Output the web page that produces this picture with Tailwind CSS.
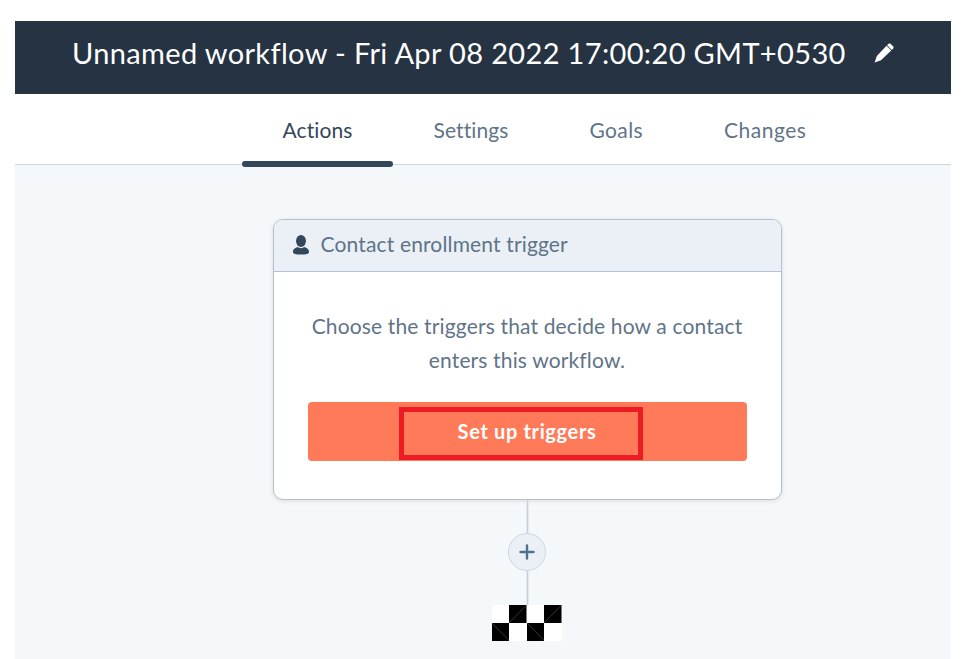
<!DOCTYPE html>
<html lang="en">
<head>
  <meta charset="UTF-8">
  <title>Unnamed workflow</title>
  <script src="https://cdn.jsdelivr.net/npm/@tailwindcss/browser@4"></script>
</head>
<body class="bg-white h-[659px] overflow-hidden font-['Lato',sans-serif]">
  <div class="ml-[15px] pt-[21px] w-[936px]">
    <!-- title bar -->
    <header class="h-[73px] bg-[#253342] flex items-center pl-[57px] pb-[9px] text-white">
      <h1 class="text-[29px] font-normal tracking-[0.35px] whitespace-nowrap">Unnamed workflow - Fri Apr 08 2022 17:00:20 GMT+0530</h1>
      <svg class="ml-[28px] w-[20px] h-[20px]" viewBox="0 0 20 20" fill="#fff">
        <path d="M14.5 0.8 Q15.6 0 16.6 0.8 L19.2 3.4 Q20 4.4 19.2 5.5 L17.8 6.9 L13.1 2.2 Z"/>
        <path d="M12.5 2.8 L17.2 7.5 L7 17.2 L0.6 19.4 L2.8 13 Z"/>
      </svg>
    </header>

    <!-- tabs -->
    <nav class="h-[71px] bg-white border-b border-[#cbd6e2] flex pl-[227px] text-[21px] tracking-[0.1px] text-[#5f7488]">
      <a class="px-[40.5px] pt-[20px] text-[#33475b] relative">Actions
        <span class="absolute left-0 right-0 bottom-[-3px] h-[6px] rounded-[3px] bg-[#33475b]"></span>
      </a>
      <a class="px-[40.5px] pt-[20px]">Settings</a>
      <a class="px-[40.5px] pt-[20px] tracking-[0.4px]">Goals</a>
      <a class="px-[40.5px] pt-[20px] tracking-[0.5px]">Changes</a>
    </nav>

    <!-- canvas -->
    <main class="bg-[#f5f8fa] h-[494px] pt-[54px] pl-[88px] flex flex-col items-center">
      <div class="w-[509px] h-[281px] bg-white border border-[#b5c1cf] rounded-[10px] shadow-[0_1px_4px_rgba(45,62,80,0.15)] overflow-hidden shrink-0">
        <div class="h-[52px] bg-[#eaf0f6] border-b border-[#b5c1cf] flex items-center pl-[18px] text-[21px] tracking-[0.15px] text-[#5f7488]">
          <svg class="w-[18px] h-[20px] mr-[11px] mb-[2px]" viewBox="0 0 18 20" fill="#33475b">
            <ellipse cx="9" cy="6" rx="5" ry="6"/>
            <path d="M1 17 C1 13.5 4 12.5 6 12 C7 13.5 11 13.5 12 12 C14 12.5 17 13.5 17 17 C17 19 14 19.5 9 19.5 C4 19.5 1 19 1 17 Z"/>
          </svg>
          <span class="mb-[3px]">Contact enrollment trigger</span>
        </div>
        <div class="px-[34px] pt-[37px]">
          <p class="text-center text-[21px] tracking-[0.15px] leading-[34px] text-[#5f7488]">Choose the triggers that decide how a contact enters this workflow.</p>
          <button class="relative mt-[25px] w-full h-[59px] bg-[#ff7a59] rounded-[4px] text-white text-[20px] tracking-[0.65px] font-bold">
            <span class="relative top-[-1px]">Set up triggers</span>
            <span class="absolute left-[91px] top-[5px] w-[244px] h-[53px] border-[5px] border-[#ed1c24]"></span>
          </button>
        </div>
      </div>

      <!-- connector -->
      <div class="relative h-[105px] w-[3px] bg-[#c5d0dc] border-x border-[#e3e9f0] shrink-0">
        <div class="absolute left-[-19px] top-[33px] w-[38px] h-[38px] rounded-full bg-[#eaf0f6] border border-[#cbd6e2] flex items-center justify-center">
          <svg class="w-[16px] h-[16px]" viewBox="0 0 16 16" stroke="#516f90" stroke-width="2.4" stroke-linecap="round">
            <path d="M8 1.5V14.5M1.5 8H14.5"/>
          </svg>
        </div>
      </div>

      <!-- end marker -->
      <div class="grid grid-cols-4 w-[70px] h-[36px] ml-[-1px]">
        <div class="bg-white"></div>
        <svg class="w-full h-full" viewBox="0 0 18 18" preserveAspectRatio="none"><rect width="18" height="18" fill="#000"/><path d="M0 18L18 0" stroke="#444" stroke-width="0.8"/></svg>
        <div class="bg-white"></div>
        <svg class="w-full h-full" viewBox="0 0 18 18" preserveAspectRatio="none"><rect width="18" height="18" fill="#000"/><path d="M0 18L18 0" stroke="#444" stroke-width="0.8"/></svg>
        <svg class="w-full h-full" viewBox="0 0 18 18" preserveAspectRatio="none"><rect width="18" height="18" fill="#000"/><path d="M0 0L18 18" stroke="#444" stroke-width="0.8"/></svg>
        <div class="bg-white"></div>
        <svg class="w-full h-full" viewBox="0 0 18 18" preserveAspectRatio="none"><rect width="18" height="18" fill="#000"/><path d="M0 0L18 18" stroke="#444" stroke-width="0.8"/></svg>
        <div class="bg-white"></div>
      </div>
    </main>
  </div>
</body>
</html>
